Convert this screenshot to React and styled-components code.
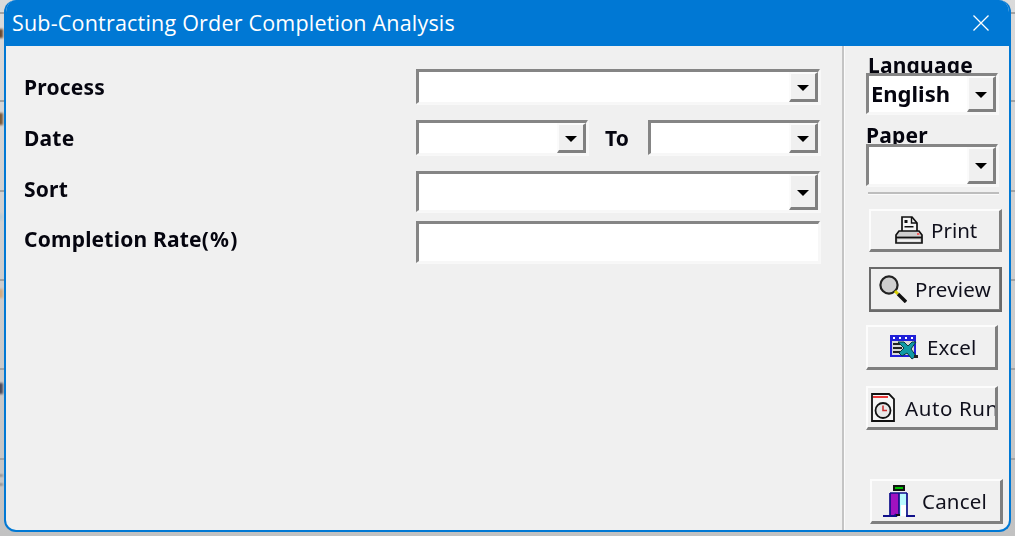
import React from "react";
import styled, { createGlobalStyle } from "styled-components";

const Global = createGlobalStyle`
  html, body { margin: 0; padding: 0; width: 1015px; height: 536px; overflow: hidden; background: #c9c9c9; }
  #root { width: 1015px; height: 536px; }
`;

const Desktop = styled.div`
  position: relative;
  width: 1015px;
  height: 536px;
  padding: 0 4px 4px 4px;
  box-sizing: border-box;
  background: linear-gradient(#dadada, #c2c2c2);
  overflow: hidden;
`;
const Behind = styled.i`
  position: absolute;
  left: ${p => p.$x}px;
  top: ${p => p.$y}px;
  width: 5px;
  height: ${p => p.$h || 2}px;
  background: ${p => p.$c || "#a2a2a2"};
  filter: blur(${p => (p.$h ? 0.8 : 0)}px);
`;
const Window = styled.div`
  position: relative;
  height: 532px;
  box-sizing: border-box;
  display: flex;
  flex-direction: column;
  background: #f0f0f0;
  border: 2px solid #0078d4;
  border-top: 0;
  border-radius: 12px;
  overflow: hidden;
`;
const TitleBar = styled.div`
  flex: none;
  height: 46px;
  margin: 0 -2px;
  padding: 0 12px 0 8px;
  background: #0078d4;
  color: #fff;
  display: flex;
  align-items: center;
  justify-content: space-between;
  font-family: "Open Sans", sans-serif;
  font-size: 21.5px;
  letter-spacing: 0.2px;
`;
const TitleText = styled.span`
  margin-top: -2px;
`;
const CloseIcon = styled.svg`
  width: 18px;
  height: 18px;
  margin-right: 9px;
`;
const Body = styled.div`
  flex: 1;
  display: flex;
  min-height: 0;
`;
const Form = styled.div`
  width: 836px;
  flex: none;
  box-sizing: border-box;
  padding: 23px 21px 0 18px;
  display: grid;
  grid-template-columns: 392px 404px;
  grid-template-rows: 51px 51px 50px 42px;
  align-content: start;
`;
const Label = styled.div`
  font-family: "Noto Sans", sans-serif;
  font-weight: 700;
  font-size: 21px;
  letter-spacing: 0.2px;
  color: #05050f;
  filter: blur(0.35px);
  white-space: nowrap;
`;
const Percent = styled.span`
  letter-spacing: 1.2px;
`;
const RowLabel = styled(Label)`
  align-self: start;
  line-height: 36px;
`;
const Sunken = styled.div`
  position: relative;
  box-sizing: border-box;
  background: #fff;
  border-style: solid;
  border-width: 3px 2px 2px 3px;
  border-color: #858585 #f7f7f7 #f7f7f7 #858585;
  box-shadow: 1px 1px 0 #f8f8f8;
  display: flex;
  justify-content: space-between;
  align-items: stretch;
  width: ${p => (p.$w ? `${p.$w}px` : "100%")};
  height: ${p => p.$h}px;
  overflow: hidden;
  filter: blur(0.3px);
`;
const SunkenText = styled.span`
  font-family: "Noto Sans", sans-serif;
  font-weight: 700;
  font-size: 22px;
  line-height: 34px;
  padding-left: 2px;
  color: #05050f;
`;
const DropBtn = styled.div`
  flex: none;
  width: 29px;
  box-sizing: border-box;
  background: #f0f0f0;
  border-style: solid;
  border-width: 2px 3px 3px 2px;
  border-color: #fbfbfb #808080 #808080 #fbfbfb;
  display: flex;
  align-items: center;
  justify-content: center;
`;
const Caret = styled.span`
  width: 0;
  height: 0;
  border-left: 6px solid transparent;
  border-right: 6px solid transparent;
  border-top: 6px solid #000;
  margin-top: 2px;
`;
const DateRow = styled.div`
  display: flex;
  align-items: flex-start;
`;
const ToLabel = styled(Label)`
  width: 60px;
  padding-left: 17px;
  box-sizing: border-box;
  line-height: 36px;
`;
const Divider = styled.div`
  flex: none;
  width: 2px;
  background: #c4c4c4;
  border-right: 1px solid #fbfbfb;
`;
const Side = styled.div`
  flex: 1;
  display: flex;
  flex-direction: column;
  align-items: flex-start;
  padding: 8px 0 0 21px;
  min-width: 0;
`;
const SideLabel = styled(Label)`
  height: ${p => p.$clip}px;
  overflow: hidden;
  line-height: 22px;
  margin-top: ${p => p.$mt || 0}px;
  margin-left: ${p => p.$ml || 0}px;
`;
const SideDivider = styled.div`
  width: 131px;
  height: 2px;
  margin: 6px 0 0 2px;
  background: #bdbdbd;
  border-bottom: 1px solid #fafafa;
`;
const Btn = styled.div`
  box-sizing: border-box;
  width: ${p => p.$w || 133}px;
  height: ${p => p.$h}px;
  margin-top: ${p => p.$mt}px;
  margin-left: ${p => p.$ml || 0}px;
  padding-left: ${p => p.$pl}px;
  display: flex;
  align-items: center;
  gap: ${p => p.$gap}px;
  background: #f0f0f0;
  border-style: solid;
  border-width: 2px 3px 3px 2px;
  border-color: #fcfcfc #7f7f7f #7f7f7f #fcfcfc;
  outline: ${p => (p.$active ? "2px solid #6a6a6a" : "none")};
  outline-offset: ${p => (p.$active ? "-2px" : "0")};
  font-family: "Noto Sans", sans-serif;
  font-size: 20.5px;
  letter-spacing: ${p => p.$track || 0.2}px;
  color: #10101c;
  white-space: nowrap;
  overflow: hidden;
  filter: blur(0.3px);
`;
const IconBox = styled.svg`
  flex: none;
  width: ${p => p.$w}px;
  height: ${p => p.$h}px;
`;

const Dropdown = ({ w, h, value }) => (
  <Sunken $w={w} $h={h}>
    {value ? <SunkenText>{value}</SunkenText> : <span />}
    <DropBtn><Caret /></DropBtn>
  </Sunken>
);

const PrinterIcon = () => (
  <IconBox $w={28} $h={28} viewBox="0 0 28 28">
    <path d="M7 1h10l5 6v9H7z" fill="#f6f6f6" stroke="#111" strokeWidth="1.7" />
    <path d="M16.5 1v6H22" fill="none" stroke="#111" strokeWidth="1.4" />
    <path d="M9.5 4h3v3h-3zM9.5 10h9v1.6h-9z" fill="#111" />
    <path d="M4 15h20l3 4v8H1v-8z" fill="#cfcfcf" stroke="#111" strokeWidth="1.7" />
    <path d="M1 21.5h26" stroke="#111" strokeWidth="1.8" />
    <path d="M3 23.5h22v2H3z" fill="#f2f2f2" />
    <path d="M22 17h2.4v2H22z" fill="#f46060" />
  </IconBox>
);
const SearchIcon = () => (
  <IconBox $w={28} $h={28} viewBox="0 0 28 28">
    <circle cx="10" cy="10" r="8.6" fill="#cfcfcf" stroke="#222" strokeWidth="2.2" />
    <path d="M16 16l3 3" stroke="#d8d000" strokeWidth="3" />
    <path d="M19 19l8 8" stroke="#111" strokeWidth="3.4" />
  </IconBox>
);
const ExcelIcon = () => (
  <IconBox $w={28} $h={25} viewBox="0 0 28 25">
    <path d="M0 0h26v22H0z" fill="#2020d8" />
    <path d="M2 6h22v14H2z" fill="#d8d8d8" />
    <path d="M3 2h2v2H3zM9 2h2v2H9zM15 2h2v2h-2zM21 2h2v2h-2z" fill="#fff" />
    <path d="M3 9h9M3 13h9M3 17h9" stroke="#222" strokeWidth="2" />
    <path d="M8 7h6l4 4 4-4h4l-5 7 5 7-4 3-5-6-5 3-3-3 5-5z" fill="#0f9aa4" stroke="#083a40" strokeWidth="1" />
    <path d="M24 20h4v3h-4z" fill="#222" />
  </IconBox>
);
const ClockIcon = () => (
  <IconBox $w={24} $h={29} viewBox="0 0 24 29">
    <path d="M1 1h17l5 5v22H1z" fill="#f6f6f6" stroke="#111" strokeWidth="1.8" />
    <path d="M2 3h15v2H2z" fill="#e83838" />
    <circle cx="12" cy="17.5" r="7.5" fill="#e8e8e8" stroke="#111" strokeWidth="1.8" />
    <path d="M12 12.5v5h4" stroke="#c83030" strokeWidth="1.6" fill="none" />
  </IconBox>
);
const DoorIcon = () => (
  <IconBox $w={32} $h={32} viewBox="0 0 32 32">
    <path d="M10 0h12v6H10z" fill="#111" />
    <path d="M12 2h8v2h-8z" fill="#00c000" />
    <path d="M7 8h9v22H7z" fill="#a012c0" />
    <path d="M16 8h8v23h-8z" fill="#b8fbff" />
    <path d="M18 20h5v11h-5z" fill="#fff" />
    <path d="M7 8h17M7 8v22M24 8v23M16 8v21" stroke="#10108a" strokeWidth="1.7" fill="none" />
    <path d="M0 31h13l-1-2M23 31h9" stroke="#10108a" strokeWidth="1.8" fill="none" />
    <path d="M13 29h4v2h-4z" fill="#111" />
  </IconBox>
);

const marks = [
  [0, 12], [1010, 12], [0, 100], [1010, 100], [0, 190], [1010, 190],
  [0, 279], [1010, 279], [0, 368], [1010, 368], [0, 458], [1010, 458],
  [-2, 29, 9, "#6a4a32"], [-2, 113, 12, "#7a5a3a"], [-2, 214, 6, "#b8ccd6"],
  [-2, 289, 9, "#d0aa80"], [-2, 383, 11, "#4a4a5a"], [-2, 475, 1, "#444"], [-2, 484, 1, "#444"],
];

export default function App() {
  return (
    <>
      <Global />
      <Desktop>
        {marks.map(([x, y, h, c]) => <Behind key={`${x}-${y}`} $x={x} $y={y} $h={h} $c={c} />)}
        <Window>
          <TitleBar>
            <TitleText>Sub-Contracting Order Completion Analysis</TitleText>
            <CloseIcon viewBox="0 0 18 18">
              <path d="M1.5 1.5l15 15M16.5 1.5l-15 15" stroke="#fff" strokeWidth="1.3" fill="none" />
            </CloseIcon>
          </TitleBar>
          <Body>
            <Form>
              <RowLabel>Process</RowLabel>
              <Dropdown h={35} />
              <RowLabel>Date</RowLabel>
              <DateRow>
                <Dropdown w={172} h={35} />
                <ToLabel>To</ToLabel>
                <Dropdown w={172} h={35} />
              </DateRow>
              <RowLabel>Sort</RowLabel>
              <Dropdown h={41} />
              <RowLabel>Completion Rate<Percent>(%)</Percent></RowLabel>
              <Sunken $h={42} />
            </Form>
            <Divider />
            <Side>
              <SideLabel $clip={19} $ml={2}>Language</SideLabel>
              <Dropdown w={132} h={41} value="English" />
              <SideLabel $clip={20} $mt={10}>Paper</SideLabel>
              <Dropdown w={132} h={42} />
              <SideDivider />
              <Btn $h={43} $mt={14} $ml={3} $pl={24} $gap={8} $track={0.01}><PrinterIcon />Print</Btn>
              <Btn $h={45} $mt={15} $ml={3} $pl={8} $gap={8} $active><SearchIcon />Preview</Btn>
              <Btn $h={45} $mt={13} $w={132} $pl={22} $gap={9}><ExcelIcon />Excel</Btn>
              <Btn $h={44} $mt={16} $w={132} $pl={3} $gap={10} $track={0.6}><ClockIcon />Auto Run</Btn>
              <Btn $h={45} $mt={49} $ml={4} $pl={11} $gap={7}><DoorIcon />Cancel</Btn>
            </Side>
          </Body>
        </Window>
      </Desktop>
    </>
  );
}
